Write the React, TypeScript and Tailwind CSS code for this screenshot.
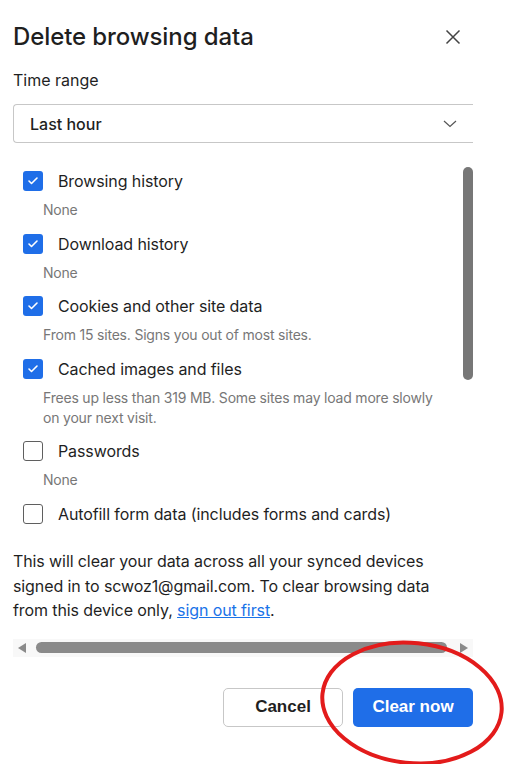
import { Check } from "lucide-react";

type Item = { label: string; sub?: string; checked: boolean };

const items: Item[] = [
  { label: "Browsing history", sub: "None", checked: true },
  { label: "Download history", sub: "None", checked: true },
  { label: "Cookies and other site data", sub: "From 15 sites. Signs you out of most sites.", checked: true },
  {
    label: "Cached images and files",
    sub: "Frees up less than 319 MB. Some sites may load more slowly on your next visit.",
    checked: true,
  },
  { label: "Passwords", sub: "None", checked: false },
  { label: "Autofill form data (includes forms and cards)", checked: false },
];

const CheckBox = ({ checked }: { checked: boolean }) =>
  checked ? (
    <div className="flex h-5 w-5 shrink-0 items-center justify-center rounded-[3px] bg-[#1f6ee8]">
      <Check className="h-3 w-3 text-white" strokeWidth={3.2} />
    </div>
  ) : (
    <div className="h-5 w-5 shrink-0 rounded-[3px] border-[1.5px] border-[#5f5f5f] bg-white" />
  );

export default function App() {
  return (
    <div className="relative h-[764px] w-[508px] overflow-hidden bg-white font-['Inter',sans-serif] text-[#1f1f1f]">
      <div className="pl-[13px] pr-[35px]">
        {/* header */}
        <div className="mt-[21px] flex h-[32px] items-center justify-between">
          <h1 className="text-[24px] font-medium tracking-[-0.1px] text-[#1f1f1f]">Delete browsing data</h1>
          <svg width="16" height="16" viewBox="0 0 16 16" className="mr-[12px]">
            <path d="M1.5 1.5 L14.5 14.5 M14.5 1.5 L1.5 14.5" stroke="#444" strokeWidth="1.5" />
          </svg>
        </div>

        <div className="mt-[15px] text-[16px] leading-[24px] text-[#1f1f1f]">Time range</div>

        {/* select */}
        <div className="mt-[12px] flex h-[39px] items-center justify-between rounded-l-[4px] border-y border-l border-[#c7c7c7] pl-[16px] pr-[16px]">
          <span className="text-[16px] font-medium text-[#1f1f1f]">Last hour</span>
          <svg width="14" height="8" viewBox="0 0 14 8">
            <path d="M1 1 L7 6.5 L13 1" stroke="#555" strokeWidth="1.2" fill="none" />
          </svg>
        </div>

        {/* checklist */}
        <div className="mt-[24px] flex h-[363px] overflow-hidden">
          <div className="flex flex-1 flex-col gap-[11.5px] pl-[10px] pt-[2px]">
            {items.map((it) => (
              <div key={it.label}>
                <div className="flex h-[24px] items-center gap-[15px]">
                  <CheckBox checked={it.checked} />
                  <span className="text-[16px] tracking-[-0.1px] text-[#1f1f1f]">{it.label}</span>
                </div>
                {it.sub && (
                  <div className="mt-[7px] pl-[20px] pr-[24px] text-[14px] leading-[20px] tracking-[-0.2px] text-[#777]">
                    {it.sub}
                  </div>
                )}
              </div>
            ))}
          </div>
          <div className="w-[10px]">
            <div className="h-[213px] w-[10px] rounded-full bg-[#777]" />
          </div>
        </div>

        {/* info */}
        <p className="mt-[19px] max-w-[440px] text-[16px] leading-[24.5px] tracking-[-0.1px] text-[#1f1f1f]">
          This will clear your data across all your synced devices signed in to scwoz1@gmail.com. To clear browsing data
          from this device only, <span className="text-[#1a73e8] underline">sign out first</span>.
        </p>

        {/* horizontal scrollbar */}
        <div className="mt-[16px] flex h-[18px] items-center bg-[#f8f8f8] px-[5px]">
          <svg width="9" height="10" viewBox="0 0 9 10">
            <path d="M8 0 L0 5 L8 10 Z" fill="#8a8a8a" />
          </svg>
          <div className="ml-[9px] mr-[12px] h-[11px] flex-1 rounded-full bg-[#8a8a8a]" />
          <svg width="9" height="10" viewBox="0 0 9 10">
            <path d="M1 0 L9 5 L1 10 Z" fill="#8a8a8a" />
          </svg>
        </div>

        {/* buttons */}
        <div className="mt-[31px] flex justify-end gap-[10px]">
          <button className="h-[39px] w-[120px] rounded-[5px] border border-[#c7c7c7] bg-white font-['Liberation_Sans',sans-serif] text-[17px] font-bold text-[#1f1f1f]">
            Cancel
          </button>
          <button className="h-[39px] w-[120px] rounded-[5px] bg-[#1f6ee8] font-['Liberation_Sans',sans-serif] text-[17px] font-bold text-white">
            Clear now
          </button>
        </div>
      </div>

      {/* red annotation circle */}
      <svg className="pointer-events-none absolute left-0 top-0" width="508" height="764" viewBox="0 0 508 764">
        <ellipse cx="412" cy="703" rx="90" ry="60" fill="none" stroke="#e31b1b" strokeWidth="4" transform="rotate(6 412 703)" />
      </svg>
    </div>
  );
}
